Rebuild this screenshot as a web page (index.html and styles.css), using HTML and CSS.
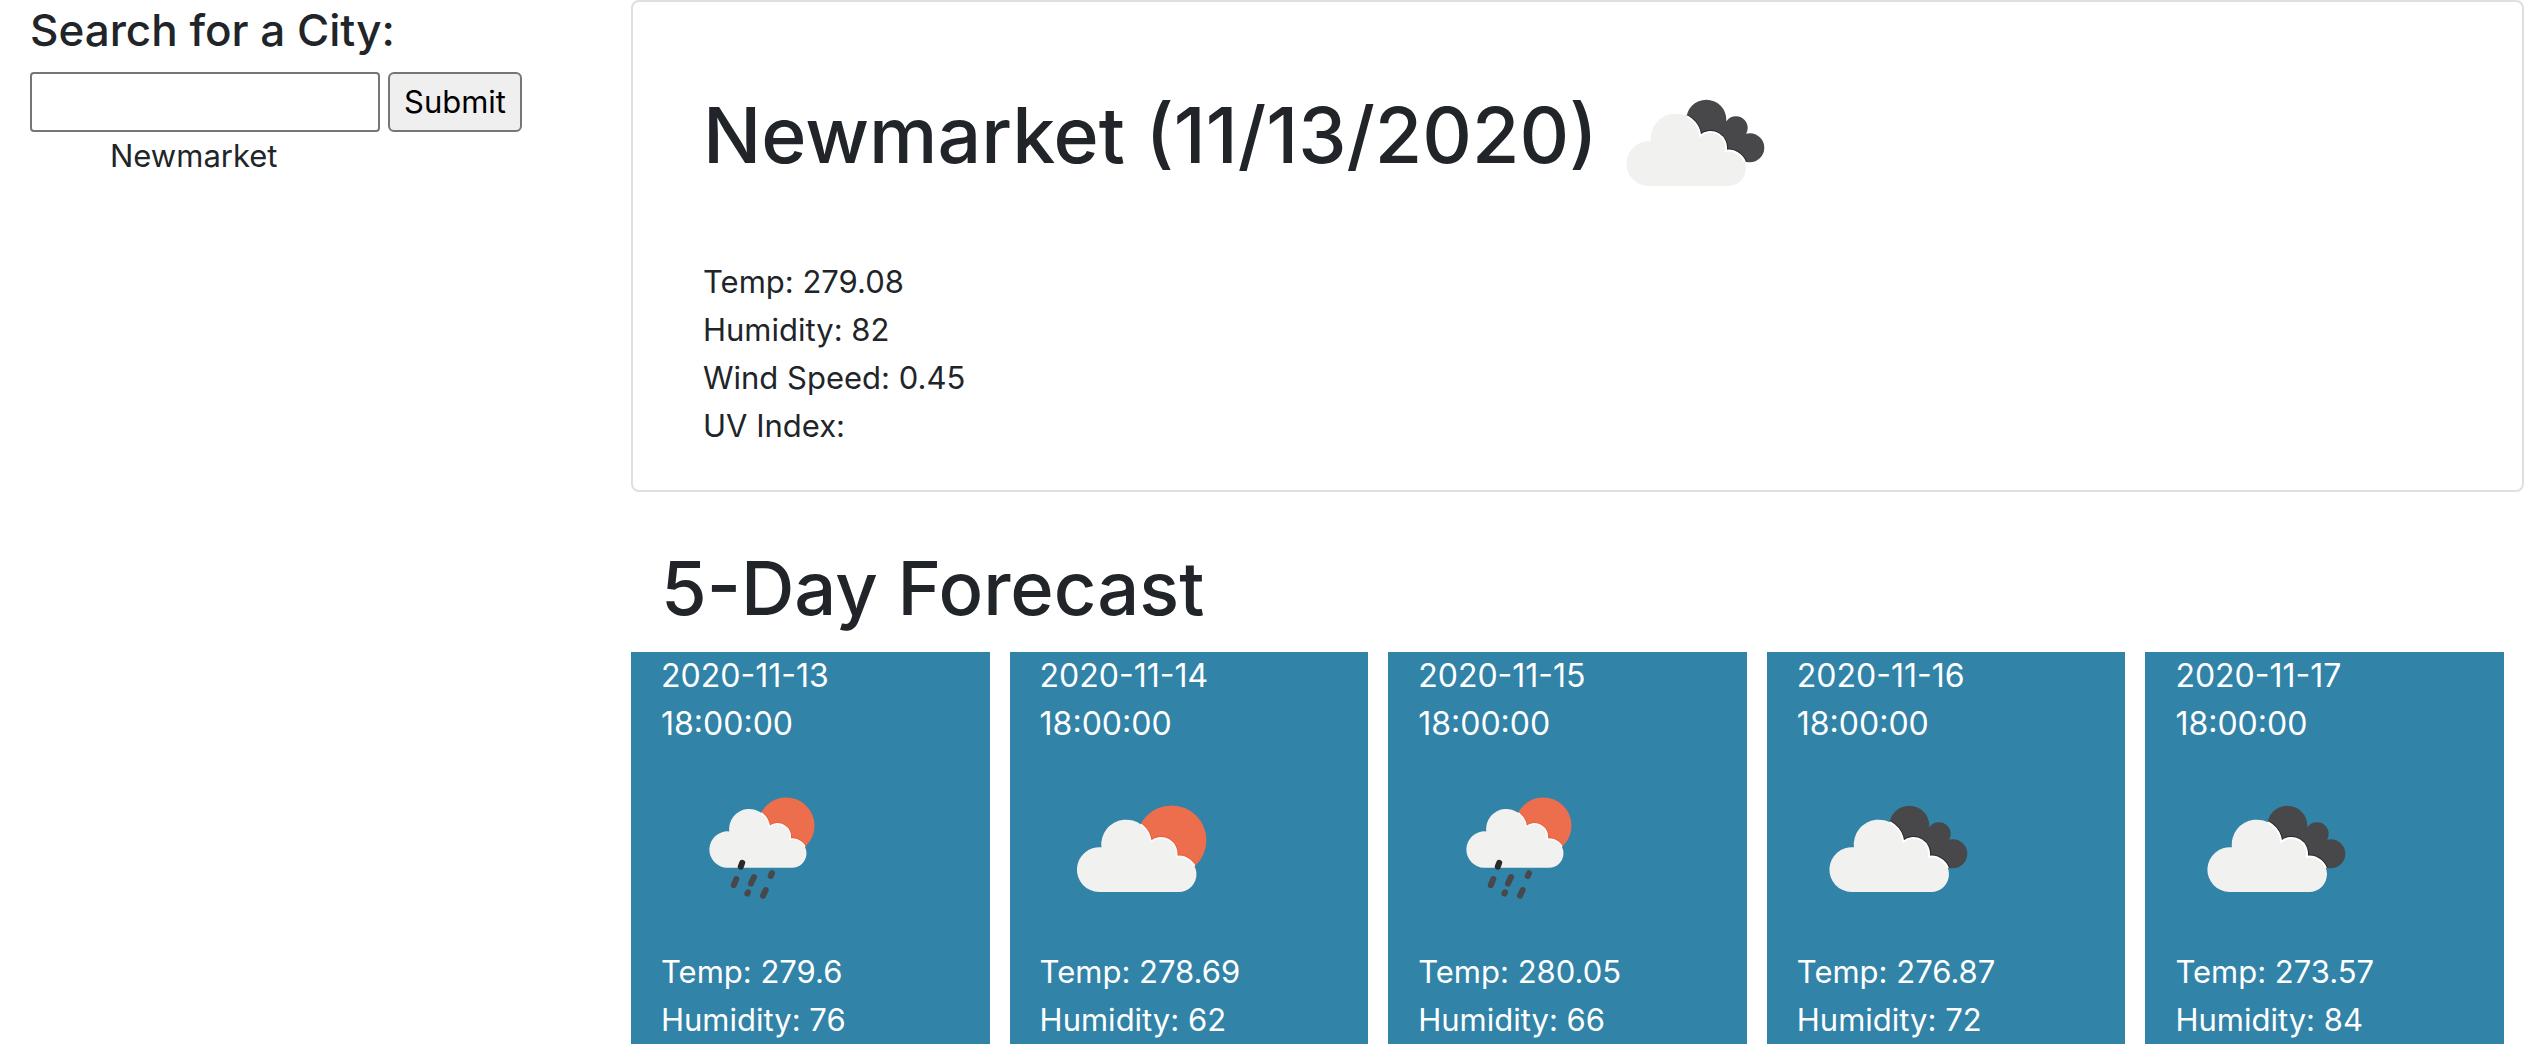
FILE: index.html
```html
<!DOCTYPE html>
<html lang="en">
<head>
  <meta charset="utf-8">
  <meta name="viewport" content="width=device-width, initial-scale=1">
  <title>Weather Dashboard</title>
  <link rel="stylesheet" href="styles.css">
</head>
<body>
  <svg class="sprite" aria-hidden="true">
    <defs>
      <path id="cloud" d="M54.5 144A22.4 22.4 0 1 1 56.9 99.3A24.8 24.8 0 1 1 106.3 93.7A15.6 15.6 0 0 1 131.7 108.8A17.7 17.7 0 1 1 133.6 144Z"/>
      <clipPath id="dark-clip">
        <circle cx="112.3" cy="77.7" r="20"/>
        <circle cx="142" cy="86" r="11.7"/>
        <circle cx="155.8" cy="105.8" r="14.5"/>
        <path d="M112 78L142 86L156 106L156 120L145 120L112 110Z"/>
      </clipPath>
      <clipPath id="sun-clip"><circle cx="131.6" cy="92.2" r="34.8"/></clipPath>
      <symbol id="broken-clouds" viewBox="0 0 200 200">
        <g clip-path="url(#dark-clip)">
          <rect width="200" height="200" fill="#48484a"/>
          <use href="#cloud" fill="none" stroke="#2a2a2c" stroke-width="4"/>
        </g>
        <use href="#cloud" fill="#f1f1f0"/>
        <use href="#cloud" fill="none" stroke="#fff" stroke-width="2" clip-path="url(#dark-clip)"/>
      </symbol>
      <symbol id="sun-cloud" viewBox="0 0 200 200">
        <g clip-path="url(#sun-clip)">
          <rect width="200" height="200" fill="#ed6e4c"/>
          <use href="#cloud" x="4.5" fill="none" stroke="#f05a32" stroke-width="4"/>
        </g>
        <use href="#cloud" x="4.5" fill="#f1f1f0"/>
        <g clip-path="url(#sun-clip)"><use href="#cloud" x="4.5" fill="none" stroke="#f5fafc" stroke-width="2"/></g>
      </symbol>
      <symbol id="sun-rain" viewBox="0 0 200 200">
        <g transform="translate(18.4 2.8) scale(.812)">
          <use href="#sun-cloud" width="200" height="200"/>
        </g>
        <g stroke="#48484a" stroke-width="6" stroke-linecap="round">
          <path stroke="#2a2a2c" d="M81.2 114.8L79.8 118.6"/>
          <path d="M75.3 131L72.8 137.2M93 129L90 135.6M111 125.2L109.7 128M87 144.3L86.4 145.6M104.7 142L102 147.7"/>
        </g>
      </symbol>
    </defs>
  </svg>

  <div class="layout">
    <aside class="sidebar">
      <form class="search">
        <label class="search-title" for="city">Search for a City:</label>
        <div class="search-row">
          <input class="search-input" id="city" type="text">
          <button class="search-button" type="button">Submit</button>
        </div>
      </form>
      <ul class="history">
        <li>Newmarket</li>
      </ul>
    </aside>

    <main class="main">
      <section class="current">
        <h1 class="title">Newmarket (11/13/2020)<svg class="icon" role="img" aria-label="Broken clouds"><use href="#broken-clouds"/></svg></h1>
        <p>Temp: 279.08</p>
        <p>Humidity: 82</p>
        <p>Wind Speed: 0.45</p>
        <p>UV Index:</p>
      </section>

      <h2 class="title forecast-title">5-Day Forecast</h2>
      <section class="forecast">
        <article class="day">
          <p class="date">2020-11-13</p><p class="date">18:00:00</p>
          <svg class="icon" role="img" aria-label="Rain"><use href="#sun-rain"/></svg>
          <p>Temp: 279.6</p><p>Humidity: 76</p>
        </article>
        <article class="day">
          <p class="date">2020-11-14</p><p class="date">18:00:00</p>
          <svg class="icon" role="img" aria-label="Few clouds"><use href="#sun-cloud"/></svg>
          <p>Temp: 278.69</p><p>Humidity: 62</p>
        </article>
        <article class="day">
          <p class="date">2020-11-15</p><p class="date">18:00:00</p>
          <svg class="icon" role="img" aria-label="Rain"><use href="#sun-rain"/></svg>
          <p>Temp: 280.05</p><p>Humidity: 66</p>
        </article>
        <article class="day">
          <p class="date">2020-11-16</p><p class="date">18:00:00</p>
          <svg class="icon" role="img" aria-label="Broken clouds"><use href="#broken-clouds"/></svg>
          <p>Temp: 276.87</p><p>Humidity: 72</p>
        </article>
        <article class="day">
          <p class="date">2020-11-17</p><p class="date">18:00:00</p>
          <svg class="icon" role="img" aria-label="Broken clouds"><use href="#broken-clouds"/></svg>
          <p>Temp: 273.57</p><p>Humidity: 84</p>
        </article>
      </section>
    </main>
  </div>
</body>
</html>
```
FILE: styles.css
```css
* {
  box-sizing: border-box;
}

body {
  margin: 0;
  background: #fff;
  color: #212529;
  font-family: Inter, "Liberation Sans", sans-serif;
  font-size: 31px;
  line-height: 48px;
}

p,
h1,
h2,
ul {
  margin: 0;
}

.sprite {
  position: absolute;
  width: 0;
  height: 0;
}

.layout {
  display: grid;
  grid-template-columns: 1fr 3fr;
}

.sidebar {
  padding: 0 30px;
}

.search-title {
  display: block;
  margin-bottom: 12px;
  font-size: 44px;
  font-weight: 500;
  line-height: 60px;
}

.search-row {
  display: flex;
  gap: 8px;
}

.search-input,
.search-button {
  height: 60px;
  border: 2px solid #767676;
  font: inherit;
}

.search-input {
  width: 350px;
  padding: 2px 4px;
  border-radius: 4px;
  background: #fff;
}

.search-button {
  padding: 0 14px;
  border-radius: 6px;
  background: #efefef;
  color: #000;
}

.history {
  padding-left: 80px;
  list-style: none;
}

.main {
  min-width: 0;
}

.current {
  padding: 40px 70px;
  border: 2px solid #dfdfdf;
  border-radius: 8px;
}

.title {
  margin-bottom: 16px;
  font-size: 77px;
  font-weight: 500;
  line-height: 96px;
}

.title .icon {
  margin-left: -4px;
}

.forecast-title {
  margin-top: 48px;
  padding-left: 30px;
  font-size: 74px;
}

.icon {
  display: inline-block;
  width: 200px;
  height: 200px;
  vertical-align: middle;
}

.forecast {
  display: grid;
  grid-template-columns: repeat(5, 1fr);
  gap: 20px;
  padding-right: 20px;
}

.day {
  padding: 0 30px;
  background: #3183a8;
  color: #fff;
}

.day .icon {
  display: block;
}

.date {
  font-size: 32px;
}
```
